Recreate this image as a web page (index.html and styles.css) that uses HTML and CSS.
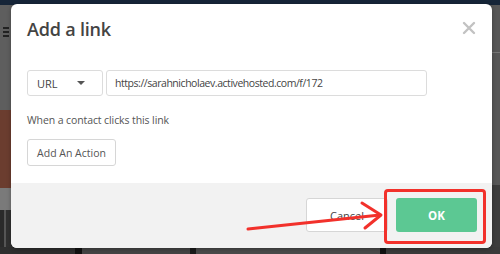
FILE: index.html
```html
<!DOCTYPE html>
<html lang="en">
<head>
    <meta charset="UTF-8">
    <meta name="viewport" content="width=device-width, initial-scale=1.0">
    <title>Add a link</title>
    <link rel="stylesheet" href="styles.css">
</head>
<body>
    <div class="backdrop">
        <div class="topbar"></div>
        <div class="side side-left">
            <div class="burger"><span></span><span></span><span></span></div>
            <div class="band band-brown"></div>
            <div class="band band-light"></div>
            <div class="band band-dark"></div>
        </div>
        <div class="side side-right">
            <div class="band band-rline"></div>
            <div class="band band-rdark"></div>
        </div>
        <div class="bottombar"></div>
    </div>

    <div class="modal">
        <div class="modal-header">
            <h2 class="modal-title">Add a link</h2>
            <svg class="close" width="14" height="14" viewBox="0 0 14 14">
                <path d="M2 2 L12 12 M12 2 L2 12" stroke="#c2c2c2" stroke-width="2.4" stroke-linecap="round"/>
            </svg>
        </div>
        <div class="modal-body">
            <div class="link-row">
                <div class="select">
                    <span>URL</span>
                    <span class="caret"></span>
                </div>
                <input type="text" class="url-input" value="https://sarahnicholaev.activehosted.com/f/172">
            </div>
            <p class="hint">When a contact clicks this link</p>
            <button class="btn btn-small">Add An Action</button>
        </div>
        <div class="modal-footer">
            <button class="btn btn-cancel">Cancel</button>
            <button class="btn btn-ok">OK</button>
        </div>
    </div>

    <!-- annotation -->
    <div class="highlight"></div>
    <svg class="arrow" width="500" height="254" viewBox="0 0 500 254">
        <path d="M248 229 L380 215" stroke="#f2312b" stroke-width="3" stroke-linecap="round" fill="none"/>
        <path d="M362 203 L381 215 L365 228" stroke="#f2312b" stroke-width="3" stroke-linecap="round" stroke-linejoin="round" fill="none"/>
    </svg>
</body>
</html>
```

FILE: styles.css
```css
body {
    margin: 0;
    width: 500px;
    height: 254px;
    overflow: hidden;
    position: relative;
    font-family: "Open Sans", Arial, sans-serif;
    background-color: #4a4a4a;
}
.backdrop {
    position: absolute;
    inset: 0;
}
.topbar {
    position: absolute;
    left: 0;
    top: 0;
    width: 500px;
    height: 5px;
    background-color: #162538;
}
.side {
    position: absolute;
    top: 5px;
    bottom: 0;
    background-color: #5e5e5e;
}
.side-left {
    left: 0;
    width: 14px;
}
.side-right {
    right: 0;
    width: 12px;
    background-color: #575757;
}
.burger {
    position: absolute;
    left: 3px;
    top: 22px;
    width: 6px;
    display: flex;
    flex-direction: column;
    gap: 2px;
}
.burger span {
    height: 2px;
    background-color: #222;
}
.band {
    position: absolute;
    left: 0;
    right: 0;
}
.band-brown {
    top: 105px;
    height: 78px;
    background-color: #6b3d2f;
}
.band-light {
    top: 183px;
    height: 22px;
    background-color: #7a7a7a;
}
.band-dark {
    top: 205px;
    bottom: 0;
    background: linear-gradient(90deg, #2a2a2a 0 4px, #555 4px 6px, #303030 6px);
}
.band-rline {
    top: 47px;
    height: 1px;
    background-color: #777;
}
.band-rdark {
    top: 180px;
    bottom: 0;
    background-color: #3c3c3c;
}
.bottombar {
    position: absolute;
    left: 0;
    bottom: 0;
    width: 500px;
    height: 7px;
    background: linear-gradient(90deg, #2e2e2e 0 75px, #111 75px 82px, #444 82px 190px, #1a1a1a 190px 196px, #4a4a4a 196px 380px, #111 380px 386px, #3a3a3a 386px);
}

.modal {
    position: absolute;
    left: 11px;
    top: 4px;
    width: 481px;
    height: 244px;
    background-color: #fff;
    border-radius: 6px;
    overflow: hidden;
    display: flex;
    flex-direction: column;
    box-shadow: 0 1px 4px rgba(0, 0, 0, 0.3);
}
.modal-header {
    display: flex;
    justify-content: space-between;
    align-items: flex-start;
    padding: 13px 16px 0;
}
.modal-title {
    margin: 0;
    font-size: 18px;
    line-height: 24px;
    font-weight: 600;
    letter-spacing: -0.2px;
    color: #444;
}
.close {
    margin-top: 4px;
    margin-right: 0;
}
.modal-body {
    flex: 1;
    padding: 29px 16px 0;
}
.link-row {
    display: flex;
    gap: 3px;
}
.select {
    box-sizing: border-box;
    width: 76px;
    height: 26px;
    border: 1px solid #dcdcdc;
    border-radius: 3px;
    display: flex;
    align-items: center;
    justify-content: space-between;
    padding: 0 17px 0 9px;
    font-size: 11px;
    color: #444;
}
.caret {
    width: 0;
    height: 0;
    border-left: 4px solid transparent;
    border-right: 4px solid transparent;
    border-top: 4px solid #555;
}
.url-input {
    box-sizing: border-box;
    width: 321px;
    height: 26px;
    border: 1px solid #dcdcdc;
    border-radius: 3px;
    padding: 0 8px;
    font-family: inherit;
    font-size: 10.5px;
    letter-spacing: -0.45px;
    color: #444;
    outline: none;
}
.hint {
    margin: 16px 0 11px;
    font-size: 10.5px;
    line-height: 16px;
    letter-spacing: -0.1px;
    color: #555;
}
.btn {
    box-sizing: border-box;
    font-family: inherit;
    border-radius: 3px;
    cursor: pointer;
}
.btn-small {
    width: 89px;
    height: 27px;
    background-color: #fff;
    border: 1px solid #d6d6d6;
    font-size: 10.5px;
    font-weight: 500;
    color: #555;
    padding: 0;
}
.modal-footer {
    height: 65px;
    box-sizing: border-box;
    background-color: #f2f2f2;
    display: flex;
    justify-content: flex-end;
    align-items: flex-start;
    gap: 8px;
    padding: 15px 15px 0;
}
.btn-cancel {
    width: 82px;
    height: 34px;
    background-color: #fff;
    border: 1px solid #d6d6d6;
    font-size: 11px;
    color: #444;
}
.btn-ok {
    width: 81px;
    height: 34px;
    background-color: #5cc893;
    border: none;
    font-size: 11.5px;
    font-weight: 700;
    color: #fff;
}
.highlight {
    position: absolute;
    left: 384px;
    top: 189px;
    width: 102px;
    height: 55px;
    box-sizing: border-box;
    border: 3px solid #f2312b;
    border-radius: 4px;
}
.arrow {
    position: absolute;
    left: 0;
    top: 0;
}
```
